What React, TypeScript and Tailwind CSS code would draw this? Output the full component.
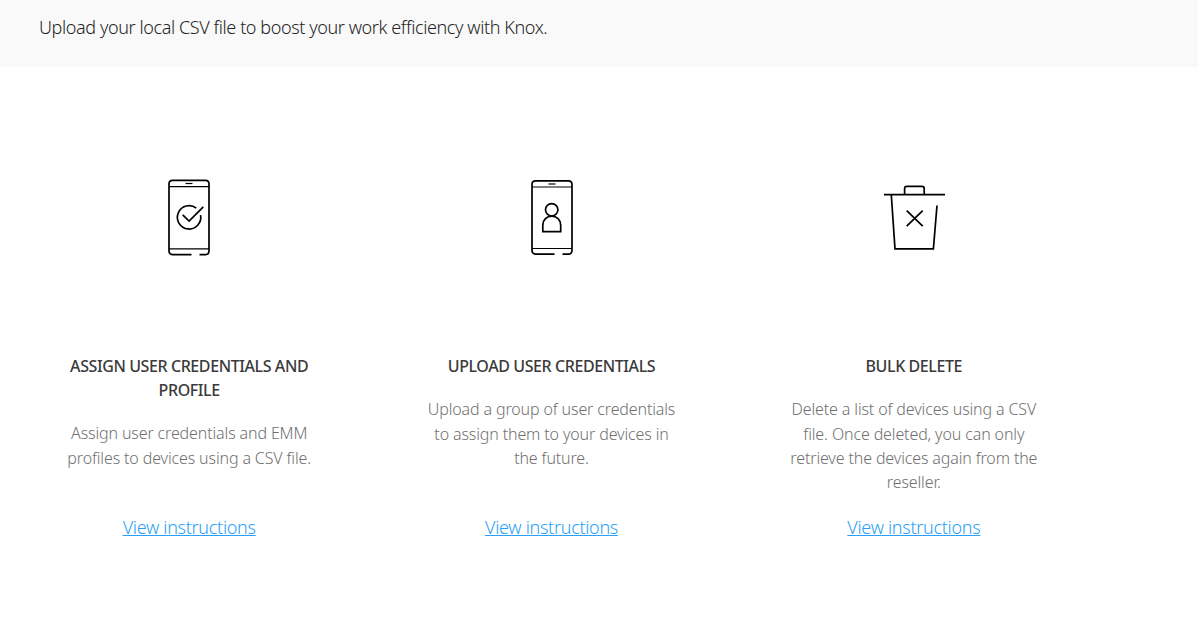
import type { ReactNode } from "react";

type Card = { icon: ReactNode; title: string[]; body: string[] };

const CheckPhone = () => (
  <svg width="80" height="95" viewBox="0 0 80 95" fill="none" stroke="#000" strokeWidth="1.7">
    <path d="M41.5 84.7H22.5Q19 84.2 19 80.7V14Q19 10.3 22.5 10.3H55.5Q59 10.3 59 14V80.7Q59 84.5 55.5 84.7H49.5" />
    <path d="M19 16.6H59M19 78.9H59" strokeWidth="1.2" />
    <path d="M35.5 13.5H42.5" strokeWidth="1.2" />
    <path d="M46.3 38.1A11.7 11.7 0 1 0 50.6 45.2" />
    <path d="M32.7 44.8L39.1 51L53.3 36.8" />
  </svg>
);

const UserPhone = () => (
  <svg width="80" height="95" viewBox="-1 0 80 95" fill="none" stroke="#000" strokeWidth="1.7">
    <path d="M41.5 84.2H22.5Q19 83.7 19 80.2V14.5Q19 10.8 22.5 10.8H55.5Q59 10.8 59 14.5V80.2Q59 84 55.5 84.2H49.5" />
    <path d="M19 17H59M19 78.5H59" strokeWidth="1.2" />
    <path d="M35.5 14H42.5" strokeWidth="1.2" />
    <circle cx="38.7" cy="39.8" r="6.2" />
    <path d="M29.8 61.6V55A8.95 8.95 0 0 1 47.7 55V61.6Z" />
  </svg>
);

const Trash = () => (
  <svg width="80" height="95" viewBox="1 0 80 95" fill="none" stroke="#000" strokeWidth="1.7">
    <path d="M10 24.6H71" />
    <path d="M30.6 24V18.4Q30.6 16.3 33 16.3H47.8Q50.2 16.3 50.2 18.4V24" />
    <path d="M17.3 25L21 78.8H59.4L63 35.5" />
    <path d="M32.7 40.7L48.7 56.2M48.7 40.7L32.7 56.2" />
  </svg>
);

const cards: Card[] = [
  {
    icon: <CheckPhone />,
    title: ["ASSIGN USER CREDENTIALS AND", "PROFILE"],
    body: ["Assign user credentials and EMM", "profiles to devices using a CSV file."],
  },
  {
    icon: <UserPhone />,
    title: ["UPLOAD USER CREDENTIALS"],
    body: ["Upload a group of user credentials", "to assign them to your devices in", "the future."],
  },
  {
    icon: <Trash />,
    title: ["BULK DELETE"],
    body: [
      "Delete a list of devices using a CSV",
      "file. Once deleted, you can only",
      "retrieve the devices again from the",
      "reseller.",
    ],
  },
];

const Lines = ({ lines }: { lines: string[] }) => (
  <>
    {lines.map((line) => (
      <span key={line} className="block whitespace-nowrap">
        {line}
      </span>
    ))}
  </>
);

export default function App() {
  return (
    <div className="h-[636px] w-[1198px] overflow-hidden bg-white font-['Noto_Sans',sans-serif]">
      <header className="h-[67px] bg-[#f9f9f9] pt-[14px] pl-[39px]">
        <p className="text-[18px] leading-[27px] font-[350] tracking-[-0.4px] text-[#252525]">
          Upload your local CSV file to boost your work efficiency with Knox.
        </p>
      </header>
      <main className="ml-[8px] grid w-[1087px] grid-cols-3 pt-[103px]">
        {cards.map((card) => (
          <section key={card.title[0]} className="flex h-[371px] flex-col items-center text-center">
            <div className="h-[184px] pl-[2px]">{card.icon}</div>
            <h2 className="text-[16px] leading-[24.1px] font-medium tracking-[-0.41px] text-[#3a3a3a]">
              <Lines lines={card.title} />
            </h2>
            <p className="mt-[19px] text-[16px] leading-[24.4px] font-[350] tracking-[-0.13px] text-[#707070]">
              <Lines lines={card.body} />
            </p>
            <a
              href="#"
              className="mt-auto text-[18px] leading-[27px] font-[350] tracking-[-0.3px] text-[#2b9ff5] underline decoration-1 underline-offset-1"
            >
              View instructions
            </a>
          </section>
        ))}
      </main>
    </div>
  );
}
